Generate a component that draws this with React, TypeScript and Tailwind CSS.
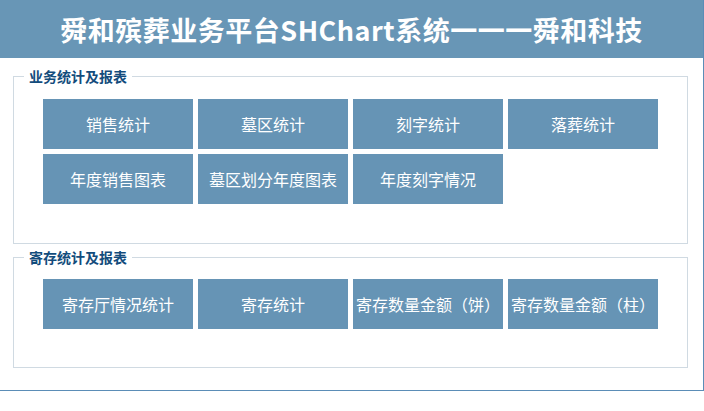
import React from 'react';

interface Section {
  title: string;
  items: string[];
}

const sections: Section[] = [
  {
    title: '业务统计及报表',
    items: ['销售统计', '墓区统计', '刻字统计', '落葬统计', '年度销售图表', '墓区划分年度图表', '年度刻字情况'],
  },
  {
    title: '寄存统计及报表',
    items: ['寄存厅情况统计', '寄存统计', '寄存数量金额（饼）', '寄存数量金额（柱）'],
  },
];

const font = { fontFamily: '"Noto Sans CJK SC", "Microsoft YaHei", sans-serif' };

const App: React.FC = () => {
  return (
    <div className="w-[704px] bg-white border-r border-b border-[#5b8db7] pb-[22px]" style={font}>
      {/* Header */}
      <div className="h-[58px] bg-[#6896b6] flex items-center justify-center">
        <h1 className="text-white text-[27px] font-bold tracking-[0.5px] leading-none">
          舜和殡葬业务平台SHChart系统一一一舜和科技
        </h1>
      </div>

      {sections.map((section, idx) => (
        <fieldset
          key={section.title}
          className={`ml-[13px] w-[675px] border border-[#d0dae2] px-0 ${
            idx === 0 ? 'mt-[9px] pt-[13px] pb-[39px]' : 'mt-[4px] pt-[12px] pb-[38px]'
          }`}
        >
          <legend className="ml-[10px] px-[5px] text-[14px] leading-[19px] font-bold text-[#134c7c]">
            {section.title}
          </legend>
          <div className="pl-[29px] grid grid-cols-[repeat(4,150px)] gap-[5px]">
            {section.items.map((item) => (
              <button
                key={item}
                className="h-[50px] bg-[#6694b5] text-white text-[16px] flex items-center justify-center whitespace-nowrap"
              >
                {item}
              </button>
            ))}
          </div>
        </fieldset>
      ))}
    </div>
  );
};

export default App;
